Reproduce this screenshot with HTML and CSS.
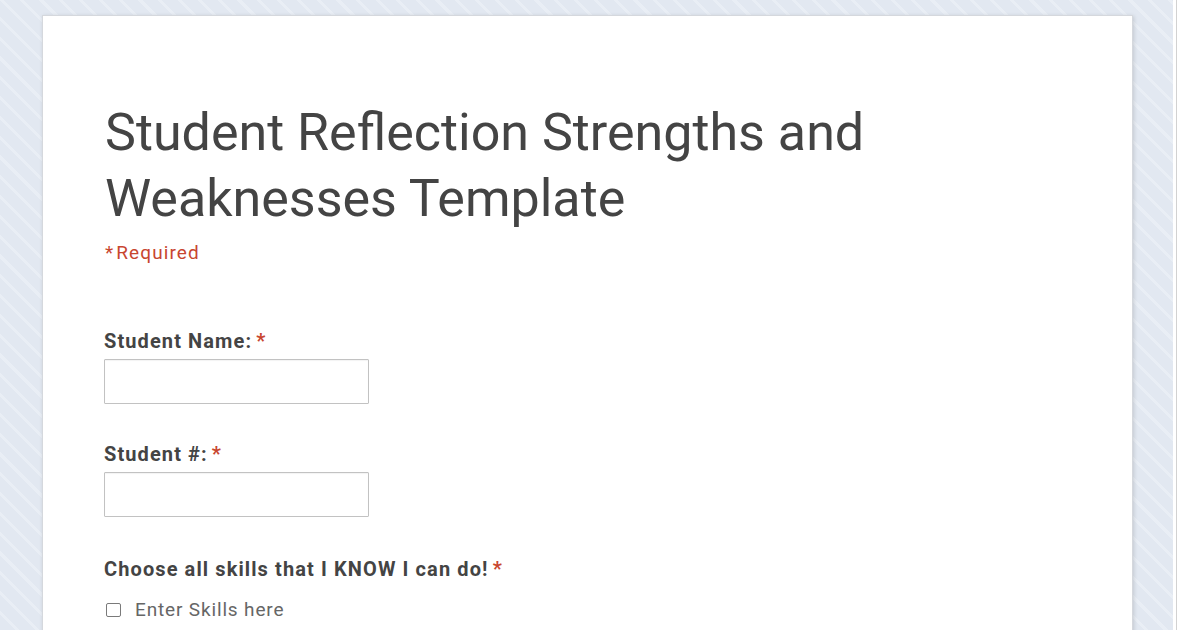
FILE: index.html
```html
<!DOCTYPE html>
<html lang="en">
<head>
<meta charset="utf-8">
<title>Student Reflection Strengths and Weaknesses Template</title>
<link rel="stylesheet" href="styles.css">
</head>
<body>
<div class="page">
  <main class="stage">
    <form class="card">
      <h1 class="title">Student Reflection Strengths and Weaknesses Template</h1>
      <p class="required-note"><span class="star">*</span>Required</p>

      <div class="question q-first">
        <label class="q-label" for="name">Student Name: <span class="star">*</span></label>
        <input class="text-input" id="name" type="text">
      </div>

      <div class="question">
        <label class="q-label" for="num">Student #: <span class="star">*</span></label>
        <input class="text-input" id="num" type="text">
      </div>

      <div class="question">
        <div class="q-label">Choose all skills that I KNOW I can do! <span class="star">*</span></div>
        <label class="choice"><span class="box"></span>Enter Skills here</label>
      </div>
    </form>
  </main>
  <div class="scrollbar"></div>
</div>
</body>
</html>
```
FILE: styles.css
```css
html, body {
  margin: 0;
  padding: 0;
  height: 100%;
  overflow: hidden;
}
body {
  font-family: Roboto, "Liberation Sans", Arial, sans-serif;
  color: #444;
}
.page {
  display: flex;
  height: 630px;
}
.stage {
  flex: 1;
  background-color: #e2e8f1;
  background-image: repeating-linear-gradient(45deg, #e2e8f1 0 11px, #e9eef5 11px 14px);
  padding: 15px 0 0 42px;
  overflow: hidden;
}
.scrollbar {
  width: 27px;
  background: linear-gradient(to right, #fff 0 3px, #d2d2d2 3px 4px, #fff 4px);
}
.card {
  width: 1091px;
  min-height: 800px;
  box-sizing: border-box;
  background: #fff;
  border: 1px solid #d5d8dd;
  box-shadow: 1px 1px 4px rgba(0, 0, 0, 0.14);
  padding: 84px 61px 0;
}
.title {
  margin: 0 0 0 1px;
  font-size: 52px;
  font-weight: 400;
  line-height: 66px;
  color: #444;
  max-width: 820px;
}
.required-note {
  margin: 10px 0 0 1px;
  font-size: 19px;
  line-height: 22px;
  letter-spacing: 1.1px;
  color: #c8462f;
}
.required-note .star {
  margin-right: 2px;
}
.star {
  color: #c8462f;
}
.q-label .star {
  margin-left: -2px;
}
.question {
  margin-top: 38px;
  display: flex;
  flex-direction: column;
  align-items: flex-start;
}
.question.q-first {
  margin-top: 65px;
}
.question:last-child {
  margin-top: 40px;
}
.q-label {
  font-size: 20px;
  font-weight: 700;
  line-height: 24px;
  letter-spacing: 1.1px;
  color: #444;
  margin-bottom: 6px;
}
.text-input {
  width: 265px;
  height: 45px;
  box-sizing: border-box;
  border: 1px solid #c2c2c2;
  border-radius: 1px;
  box-shadow: inset 0 1px 1px rgba(0,0,0,0.05);
  margin: 0;
  background: #fff;
}
.choice {
  display: flex;
  align-items: center;
  gap: 14px;
  font-size: 19px;
  line-height: 22px;
  letter-spacing: 0.85px;
  color: #666;
  margin-top: 12px;
  padding-left: 2px;
}
.box {
  width: 15px;
  height: 14px;
  border: 1.5px solid #7a7a7a;
  border-radius: 2px;
  box-sizing: border-box;
  display: inline-block;
}
```
